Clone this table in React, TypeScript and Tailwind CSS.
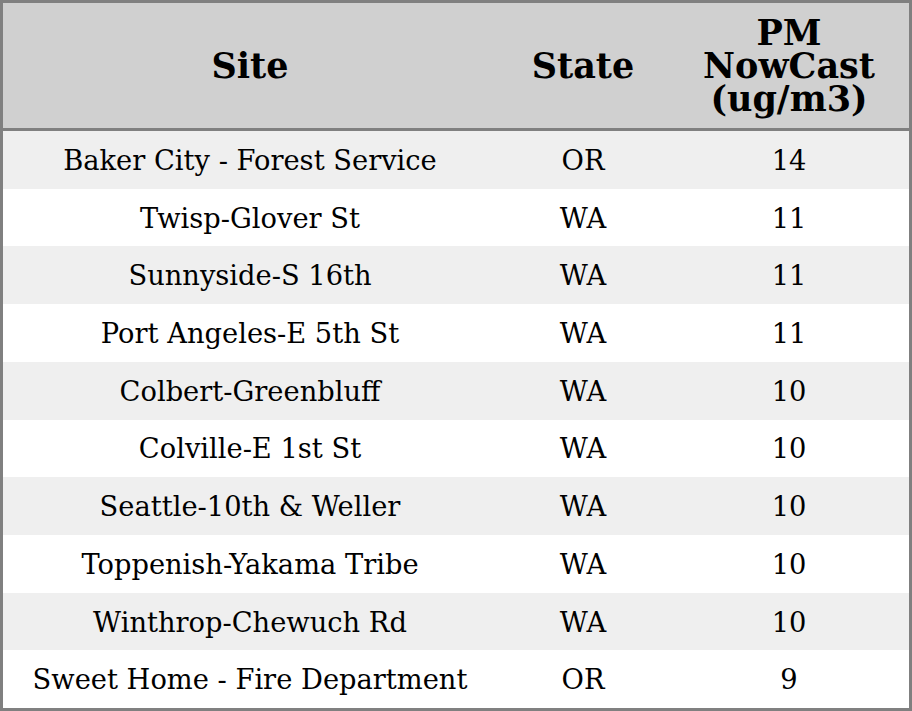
import React from 'react';

type Row = { site: string; state: string; value: number };

const rows: Row[] = [
  { site: 'Baker City - Forest Service', state: 'OR', value: 14 },
  { site: 'Twisp-Glover St', state: 'WA', value: 11 },
  { site: 'Sunnyside-S 16th', state: 'WA', value: 11 },
  { site: 'Port Angeles-E 5th St', state: 'WA', value: 11 },
  { site: 'Colbert-Greenbluff', state: 'WA', value: 10 },
  { site: 'Colville-E 1st St', state: 'WA', value: 10 },
  { site: 'Seattle-10th & Weller', state: 'WA', value: 10 },
  { site: 'Toppenish-Yakama Tribe', state: 'WA', value: 10 },
  { site: 'Winthrop-Chewuch Rd', state: 'WA', value: 10 },
  { site: 'Sweet Home - Fire Department', state: 'OR', value: 9 },
];

const App: React.FC = () => {
  return (
    <div className="w-[912px] h-[711px] bg-white font-['DejaVu_Serif',serif] text-black">
      <div className="flex flex-col h-full border-[3px] border-[#808080]">
        {/* Header */}
        <div className="flex h-[125px] shrink-0 bg-[#d0d0d0] border-b-[3px] border-[#808080] box-content font-bold text-[35px] leading-[33px]">
          <div className="w-[494px] flex items-center justify-center">Site</div>
          <div className="w-[172px] flex items-center justify-center">State</div>
          <div className="flex-1 flex flex-col items-center justify-center text-center">
            <span>PM</span>
            <span>NowCast</span>
            <span>(ug/m3)</span>
          </div>
        </div>

        {/* Body rows */}
        <div className="flex-1 flex flex-col text-[27.3px]">
          {rows.map((r, i) => (
            <div
              key={r.site}
              className={`flex flex-1 items-center pt-[3px] ${i % 2 === 0 ? 'bg-[#efefef]' : 'bg-white'}`}
            >
              <div className="w-[494px] text-center">{r.site}</div>
              <div className="w-[172px] text-center">{r.state}</div>
              <div className="flex-1 text-center">{r.value}</div>
            </div>
          ))}
        </div>
      </div>
    </div>
  );
};

export default App;
